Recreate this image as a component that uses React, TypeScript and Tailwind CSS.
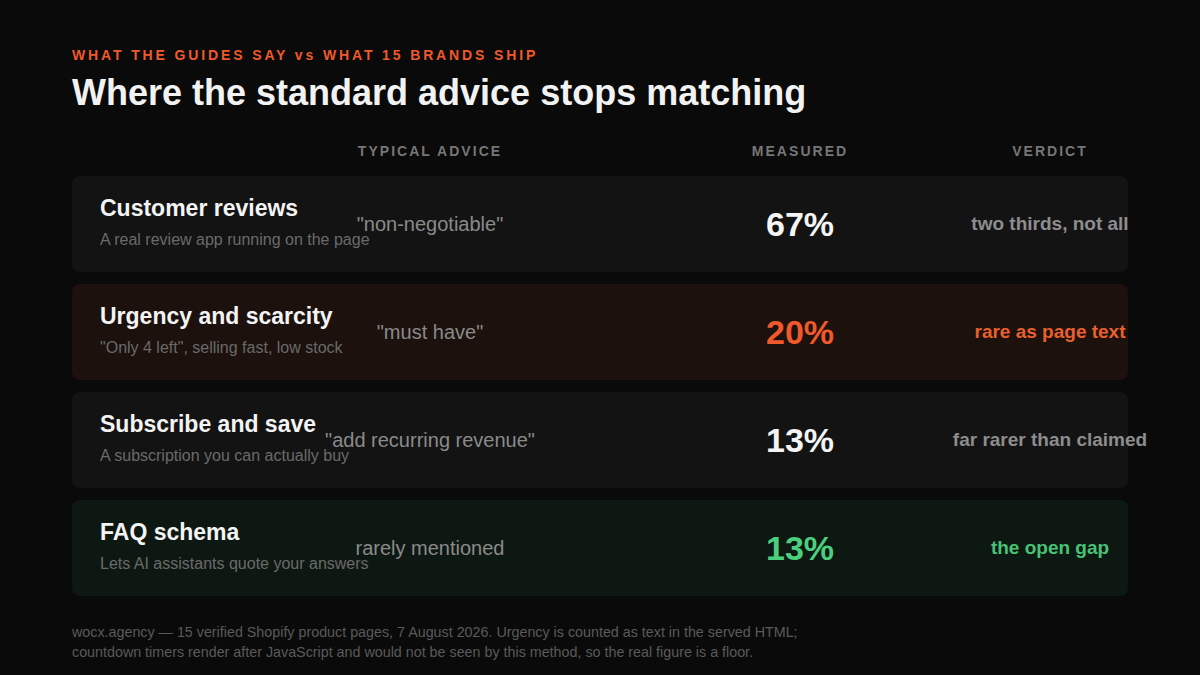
import React from "react";

type Row = {
  title: string;
  sub: string;
  advice: string;
  measured: string;
  verdict: string;
  tone: "neutral" | "orange" | "green";
};

const rows: Row[] = [
  { title: "Customer reviews", sub: "A real review app running on the page", advice: "\"non-negotiable\"", measured: "67%", verdict: "two thirds, not all", tone: "neutral" },
  { title: "Urgency and scarcity", sub: "\"Only 4 left\", selling fast, low stock", advice: "\"must have\"", measured: "20%", verdict: "rare as page text", tone: "orange" },
  { title: "Subscribe and save", sub: "A subscription you can actually buy", advice: "\"add recurring revenue\"", measured: "13%", verdict: "far rarer than claimed", tone: "neutral" },
  { title: "FAQ schema", sub: "Lets AI assistants quote your answers", advice: "rarely mentioned", measured: "13%", verdict: "the open gap", tone: "green" },
];

export default function App() {
  return (
    <div
      className="w-[1200px] h-[675px] bg-[#0a0a0a] overflow-hidden px-[72px] pt-[45px]"
      style={{ fontFamily: '"Liberation Sans", Arial, sans-serif' }}
    >
      <div className="text-[14px] font-bold tracking-[0.205em] text-[#f0592b] leading-[20px] whitespace-nowrap">
        WHAT THE GUIDES SAY vs WHAT 15 BRANDS SHIP
      </div>
      <h1 className="mt-[6px] text-[36px] font-bold text-[#f2f2f2] leading-[44px]">
        Where the standard advice stops matching
      </h1>

      <div className="mt-[26px] grid grid-cols-[160px_340px_400px_100px] px-[28px] text-[14px] font-bold tracking-[0.145em] text-[#767676] leading-[20px]">
        <div />
        <div className="text-center whitespace-nowrap">TYPICAL ADVICE</div>
        <div className="text-center whitespace-nowrap">MEASURED</div>
        <div className="flex justify-center whitespace-nowrap">VERDICT</div>
      </div>

      <div className="mt-[15px] flex flex-col gap-[12px]">
        {rows.map((r) => {
          const bg =
            r.tone === "orange" ? "bg-[#1c110c]" : r.tone === "green" ? "bg-[#0e1812]" : "bg-[#131313]";
          const mColor =
            r.tone === "orange" ? "text-[#f0592b]" : r.tone === "green" ? "text-[#4ccf7c]" : "text-[#f4f4f4]";
          const vColor =
            r.tone === "orange" ? "text-[#e8602f]" : r.tone === "green" ? "text-[#48c274]" : "text-[#8d8d8d]";
          return (
            <div
              key={r.title}
              className={`${bg} h-[96px] rounded-[8px] grid grid-cols-[160px_340px_400px_100px] items-center px-[28px]`}
            >
              <div className="flex flex-col gap-[9px] whitespace-nowrap -mt-[3px]">
                <div className="text-[23px] font-bold text-[#f4f4f4] leading-[26px]">{r.title}</div>
                <div className="text-[16px] text-[#6a6a6a] leading-[20px]">{r.sub}</div>
              </div>
              <div className="flex justify-center whitespace-nowrap text-[20px] text-[#8a8a8a] leading-[24px]">
                {r.advice}
              </div>
              <div className={`flex justify-center text-[34px] font-bold leading-[40px] ${mColor}`}>
                {r.measured}
              </div>
              <div className={`flex justify-center whitespace-nowrap text-[19px] font-bold leading-[22px] ${vColor}`}>
                {r.verdict}
              </div>
            </div>
          );
        })}
      </div>

      <div className="mt-[26px] text-[14.3px] text-[#5a5a5a] leading-[20px] whitespace-nowrap">
        wocx.agency — 15 verified Shopify product pages, 7 August 2026. Urgency is counted as text in the served HTML;
        <br />
        countdown timers render after JavaScript and would not be seen by this method, so the real figure is a floor.
      </div>
    </div>
  );
}
